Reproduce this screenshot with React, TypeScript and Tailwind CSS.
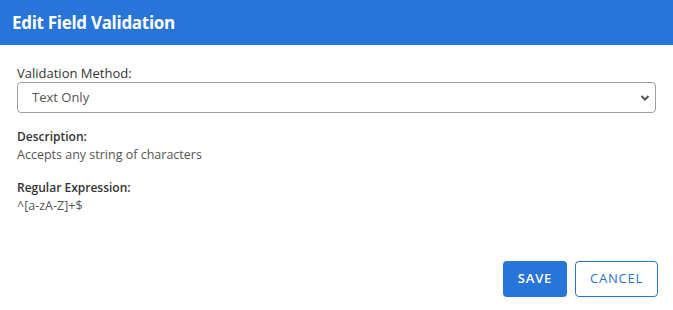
import React from "react";

export default function App() {
  return (
    <div className="w-[673px] h-[310px] bg-white flex flex-col" style={{ fontFamily: '"Open Sans", sans-serif' }}>
      <div className="h-[45px] bg-[#2775d8] flex items-center px-[12px] shrink-0">
        <h1 className="text-white text-[17px] font-bold tracking-[-0.3px]">Edit Field Validation</h1>
      </div>
      <div className="px-[17px] pt-[19px] flex flex-col flex-1">
        <label className="text-[13px] leading-[18px] text-[#333]">Validation Method:</label>
        <div className="relative mt-[0px] h-[31px] w-[639px] border border-[#9e9e9e] rounded-[4px] flex items-center pl-[14px]">
          <span className="text-[13px] text-[#555]">Text Only</span>
          <svg className="absolute right-[5px] top-[11px]" width="10" height="8" viewBox="0 0 10 8">
            <path d="M1.5 2 L5 5.5 L8.5 2" fill="none" stroke="#555" strokeWidth="2" />
          </svg>
        </div>
        <div className="mt-[15px] text-[12px] leading-[18px] font-semibold text-[#333]">Description:</div>
        <div className="text-[12.5px] leading-[18px] text-[#555]">Accepts any string of characters</div>
        <div className="mt-[15px] text-[12px] leading-[18px] font-semibold text-[#333]">Regular Expression:</div>
        <div className="text-[12.5px] leading-[18px] text-[#555]">^[a-zA-Z]+$</div>
        <div className="flex justify-end gap-[8px] mt-[46px] mr-[-2px]">
          <button className="w-[64px] h-[36px] bg-[#2775d8] text-white text-[13px] font-semibold tracking-[0.8px] rounded-[4px]">SAVE</button>
          <button className="w-[83px] h-[36px] bg-white border border-[#2775d8] text-[#2775d8] text-[13px] tracking-[0.8px] rounded-[4px]">CANCEL</button>
        </div>
      </div>
    </div>
  );
}
